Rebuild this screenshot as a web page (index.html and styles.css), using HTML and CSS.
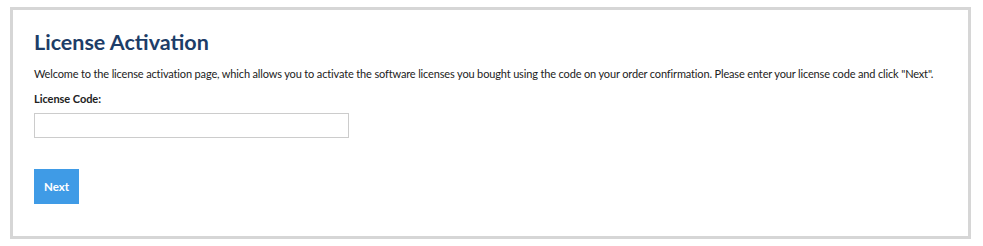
FILE: index.html
```html
<!DOCTYPE html>
<html>
<head>
<meta charset="utf-8">
<link rel="stylesheet" href="styles.css">
</head>
<body>
<div class="panel">
  <h1 class="title">License Activation</h1>
  <p class="intro">Welcome to the license activation page, which allows you to activate the software licenses you bought using the code on your order confirmation. Please enter your license code and click "Next".</p>
  <label class="label" for="code">License Code:</label>
  <input class="field" id="code" type="text">
  <div class="actions">
    <button class="btn" type="button">Next</button>
  </div>
</div>
</body>
</html>
```
FILE: styles.css
```css
html, body {
  margin: 0;
  padding: 0;
  background: #ffffff;
}
body {
  padding: 7px 12px 7px 10px;
  font-family: "Lato", "Open Sans", sans-serif;
  color: #222222;
}
.panel {
  border: 3px solid #d6d6d6;
  height: 226px;
  padding: 0 21px;
  display: flex;
  flex-direction: column;
  align-items: flex-start;
}
.title {
  margin: 18px 0 0;
  font-size: 21.5px;
  line-height: 28px;
  font-weight: 700;
  color: #1d3d68;
}
.intro {
  margin: 10px 0 0;
  font-size: 11px;
  letter-spacing: -0.15px;
  line-height: 16px;
  white-space: nowrap;
}
.label {
  margin-top: 9px;
  font-size: 11px;
  letter-spacing: -0.05px;
  line-height: 16px;
  font-weight: 700;
}
.field {
  margin-top: 6px;
  width: 315px;
  height: 25px;
  box-sizing: border-box;
  border: 1px solid #cccccc;
  padding: 0 6px;
}
.actions {
  margin-top: 31px;
}
.btn {
  width: 45px;
  height: 35px;
  border: none;
  background: #3f9be6;
  color: #ffffff;
  font-family: inherit;
  font-size: 11.5px;
  font-weight: 700;
  padding: 0;
}
```
